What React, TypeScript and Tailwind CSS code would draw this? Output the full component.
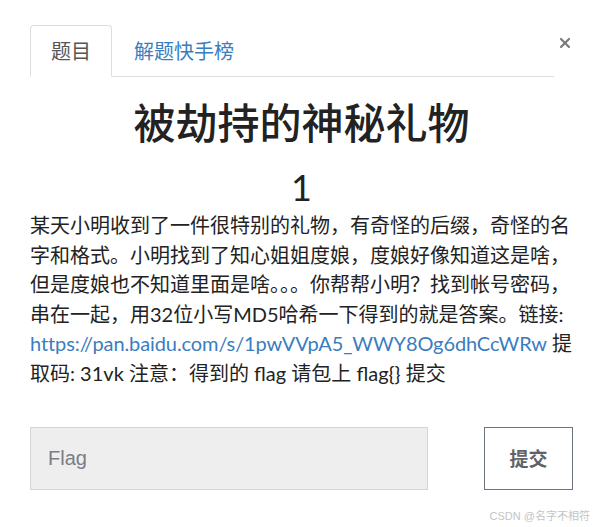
import { X } from 'lucide-react';

const sans = 'font-["Lato","Noto_Sans_CJK_SC",sans-serif]';

export default function App() {
  return (
    <div className={`relative w-[596px] h-[527px] bg-white ${sans} overflow-hidden`}>
      <div className="pl-[30px] pr-[23px] pt-[25px]">
        <div className="flex items-start">
          <ul className="flex flex-1 border-b border-[#dddddd]">
            <li className="-mb-px h-[52px] px-[20px] flex items-center border border-[#dddddd] border-b-white rounded-t-[4px] bg-white text-[20px] text-[#555555]">
              题目
            </li>
            <li className="h-[51px] px-[22px] flex items-center text-[20px] text-[#3a7dbf]">
              解题快手榜
            </li>
          </ul>
          <button className="ml-[3px] mt-[10px] text-[#7a7a7a]" title="Close">
            <X size={16} strokeWidth={3.2} />
          </button>
        </div>

        <h1 className="mt-[22px] text-center text-[42px] leading-[48px] font-medium text-[#222222]">
          被劫持的神秘礼物
        </h1>
        <div className="mt-[20px] text-center text-[36px] leading-[40px] text-[#222222]">1</div>

        <p className="mt-[4px] -mr-[4px] text-[20px] leading-[29.6px] text-[#222222]">
          某天小明收到了一件很特别的礼物，有奇怪的后缀，奇怪的名字和格式。小明找到了知心姐姐度娘，度娘好像知道这是啥，但是度娘也不知道里面是啥。。。你帮帮小明？找到帐号密码，串在一起，用32位小写MD5哈希一下得到的就是答案。链接:{' '}
          <a href="#" className="text-[#3a7dbf] tracking-[-0.1px]">https://pan.baidu.com/s/1pwVVpA5_WWY8Og6dhCcWRw</a> 提取码: 31vk 注意：得到的 flag 请包上 flag{'{}'} 提交
        </p>

        <div className="mt-[38px] flex items-center gap-[56px]">
          <input
            placeholder="Flag"
            className='w-[398px] h-[63px] bg-[#eeeeee] border border-[#d3d5da] pl-[17px] text-[20px] font-["Liberation_Sans",Arial,sans-serif] placeholder:text-[#7a7d82] outline-none'
          />
          <button className='w-[89px] h-[63px] border border-[#6b7682] text-[19px] font-bold text-[#5f6368] font-["Noto_Sans_CJK_SC",sans-serif]'>
            提交
          </button>
        </div>
      </div>
      <div className='absolute right-[6px] bottom-[3px] text-[11px] text-[#c4c4c4] font-["Liberation_Sans","Noto_Sans_CJK_SC",sans-serif]'>
        CSDN @名字不相符
      </div>
    </div>
  );
}
